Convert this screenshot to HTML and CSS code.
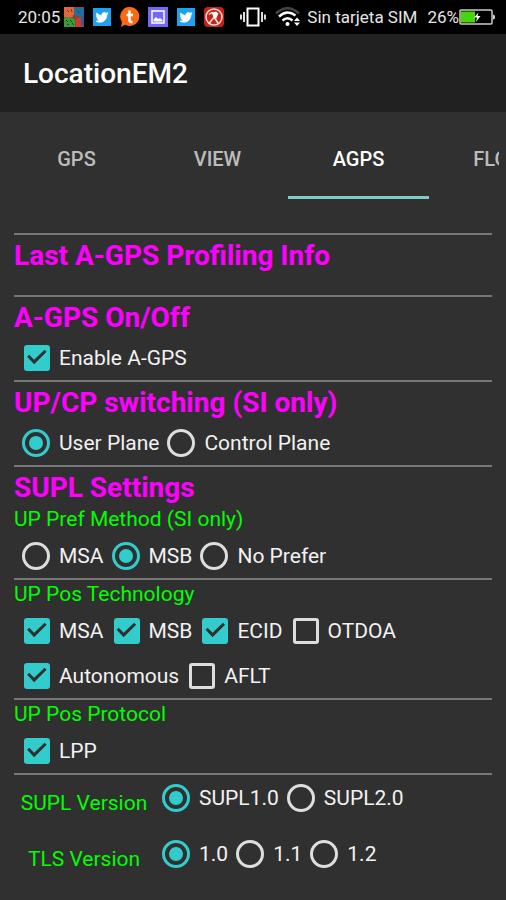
FILE: index.html
```
<!DOCTYPE html>
<html lang="es">
<head>
    <meta charset="UTF-8">
    <meta name="viewport" content="width=device-width, initial-scale=1.0">
    <title>LocationEM2</title>
    <link rel="stylesheet" href="styles.css">
</head>
<body>
    <div class="statusbar">
        <span class="clock">20:05</span>
        <div class="notifications">
            <svg width="20" height="20" viewBox="0 0 20 20">
                <rect width="20" height="20" fill="#8a4a3a"/>
                <path d="M0 0h10v9l-4 2-6-1z" fill="#e0693a"/>
                <path d="M10 1h10v8l-5 1-5-3z" fill="#1d6fa5"/>
                <path d="M0 11l6-1 5 3v7H0z" fill="#3c9a3c"/>
                <path d="M12 11h5v9h-5z" fill="#d2382c"/>
                <path d="M17 10h3v8h-3z" fill="#2a5f9a"/>
                <path d="M2 13l2 2m2-2l2 2m-5 2l2 1m3-2l2 2" stroke="#17421b" stroke-width="1"/>
                <path d="M3 3l2 2m2-3l1 3M13 4l3 2M9 8l3 4" stroke="#7a3320" stroke-width="1"/>
            </svg>
            <svg width="18" height="18" viewBox="0 0 24 24">
                <rect width="24" height="24" fill="#1da1f2"/>
                <path d="M20 7.500c-.6.3-1.200.4-1.900.5.7-.4 1.200-1 1.400-1.800-.6.4-1.300.6-2.100.8a3.300 3.300 0 0 0-5.600 3C9 9.900 6.600 8.600 5 6.600c-.9 1.500-.4 3.400 1 4.400-.5 0-1-.2-1.500-.4 0 1.600 1.100 2.900 2.600 3.200-.5.1-1 .2-1.500.1.400 1.300 1.600 2.200 3.100 2.300A6.600 6.600 0 0 1 4 17.500c6.800 4 14.500-.7 14.400-8.300.6-.5 1.200-1 1.600-1.700z" fill="#fff" stroke="#fff"/>
            </svg>
            <svg width="20" height="20" viewBox="0 0 20 20">
                <path d="M10 0a9.500 9.500 0 1 1-5 17.700L1 20l1-5A9.500 9.500 0 0 1 10 0z" fill="#fb6a13"/>
                <path d="M9.500 3.500v10q0 2 3 1.500M6.500 8h6.500" fill="none" stroke="#fff" stroke-width="2.500"/>
            </svg>
            <svg width="20" height="20" viewBox="0 0 20 20">
                <rect width="20" height="20" fill="#7468f5"/>
                <rect x="4" y="4" width="12" height="12" fill="none" stroke="#fff" stroke-width="1.500"/>
                <path d="M5.500 14.500v-2l2.500-2.500 2 2 2-1 2.500 2v1.500z" fill="#fff"/>
            </svg>
            <svg width="18" height="18" viewBox="0 0 24 24">
                <rect width="24" height="24" fill="#1da1f2"/>
                <path d="M20 7.500c-.6.3-1.200.4-1.900.5.7-.4 1.200-1 1.400-1.800-.6.4-1.300.6-2.100.8a3.300 3.300 0 0 0-5.600 3C9 9.900 6.600 8.600 5 6.600c-.9 1.500-.4 3.400 1 4.400-.5 0-1-.2-1.500-.4 0 1.600 1.100 2.900 2.600 3.200-.5.1-1 .2-1.500.1.400 1.300 1.600 2.200 3.100 2.300A6.600 6.600 0 0 1 4 17.500c6.800 4 14.500-.7 14.400-8.300.6-.5 1.200-1 1.600-1.700z" fill="#fff" stroke="#fff"/>
            </svg>
            <svg width="20" height="20" viewBox="0 0 20 20">
                <rect width="20" height="20" rx="4" fill="#c5221a"/>
                <circle cx="10" cy="10" r="8" fill="none" stroke="#f3dcd8" stroke-width="1.500"/>
                <path d="M5 7.500l3-2 5 2-1 3-2.500.5-5 6M10 10l4 6" fill="none" stroke="#f8e8e4" stroke-width="1.500"/>
                <path d="M8 6l4-1.500 2.500 2-2 3.500-3 .5z" fill="#fff"/>
            </svg>
        </div>
        <div class="signals">
            <svg width="26" height="20" viewBox="0 0 26 20">
                <rect x="7.500" y="1.500" width="11" height="17" fill="none" stroke="#fff" stroke-width="2"/>
                <path d="M4 5v10M22 5v10M1 7.500v5M25 7.500v5" stroke="#ddd" stroke-width="2"/>
            </svg>
            <svg width="26" height="20" viewBox="0 0 26 20">
                <path d="M1 6.500Q12.500-4 24 6.500" fill="none" stroke="#444" stroke-width="2.500"/>
                <path d="M4 9.500Q12 2 20.500 8.500M7.500 13.500Q12.500 9 17.500 13.500" fill="none" stroke="#fff" stroke-width="2.500"/>
                <circle cx="12.500" cy="17" r="2" fill="#fff"/>
                <path d="M19 14l3-3.500 3 3.500zM19 15.500l3 3.500 3-3.500z" fill="#fff"/>
            </svg>
        </div>
        <span class="carrier">Sin tarjeta SIM</span>
        <span class="battery">26%
            <svg width="36" height="16" viewBox="0 0 36 16">
                <rect x="1" y="1" width="32" height="14" rx="1" fill="#000" stroke="#ccc" stroke-width="1.500"/>
                <path d="M2 2.500h14v11H2z" fill="#47d50b"/>
                <path d="M34 5.500q2 0 2 2.500t-2 2.500z" fill="#ddd"/>
                <path d="M19.500 3.500l-4.500 5h3l-1 4.500 4.500-6h-3z" fill="#fff"/>
            </svg>
        </span>
    </div>

    <header class="titlebar">
        <h1>LocationEM2</h1>
    </header>

    <nav class="tabs">
        <button type="button">GPS</button>
        <button type="button">VIEW</button>
        <button type="button" class="active">AGPS</button>
        <button type="button">FLOW</button>
    </nav>

    <main>
        <section class="profiling">
            <h2>Last A-GPS Profiling Info</h2>
        </section>

        <section>
            <h2>A-GPS On/Off</h2>
            <div class="options">
                <label><input type="checkbox" name="enable" checked>Enable A-GPS</label>
            </div>
        </section>

        <section>
            <h2>UP/CP switching (SI only)</h2>
            <div class="options">
                <label><input type="radio" name="plane" checked>User Plane</label>
                <label><input type="radio" name="plane">Control Plane</label>
            </div>
        </section>

        <section>
            <h2>SUPL Settings</h2>
            <h3>UP Pref Method (SI only)</h3>
            <div class="options">
                <label><input type="radio" name="method">MSA</label>
                <label><input type="radio" name="method" checked>MSB</label>
                <label><input type="radio" name="method">No Prefer</label>
            </div>
        </section>

        <section>
            <h3>UP Pos Technology</h3>
            <div class="options">
                <label><input type="checkbox" name="msa" checked>MSA</label>
                <label><input type="checkbox" name="msb" checked>MSB</label>
                <label><input type="checkbox" name="ecid" checked>ECID</label>
                <label><input type="checkbox" name="otdoa">OTDOA</label>
            </div>
            <div class="options">
                <label><input type="checkbox" name="autonomous" checked>Autonomous</label>
                <label><input type="checkbox" name="aflt">AFLT</label>
            </div>
        </section>

        <section>
            <h3>UP Pos Protocol</h3>
            <div class="options">
                <label><input type="checkbox" name="lpp" checked>LPP</label>
            </div>
        </section>

        <section>
            <div class="version">
                <h3>SUPL Version</h3>
                <div class="options">
                    <label><input type="radio" name="supl" checked>SUPL1.0</label>
                    <label><input type="radio" name="supl">SUPL2.0</label>
                </div>
            </div>
            <div class="version">
                <h3>TLS Version</h3>
                <div class="options">
                    <label><input type="radio" name="tls" checked>1.0</label>
                    <label><input type="radio" name="tls">1.1</label>
                    <label><input type="radio" name="tls">1.2</label>
                </div>
            </div>
        </section>
    </main>
</body>
</html>
```
FILE: styles.css
```
* {
    box-sizing: border-box;
}

body {
    margin: 0;
    background-color: #303030;
    color: #f2f2f2;
    font-family: Roboto, "Liberation Sans", sans-serif;
    font-size: 21px;
}

h1, h2, h3 {
    margin: 0;
}

/* status bar */
.statusbar {
    display: flex;
    align-items: center;
    height: 34px;
    padding: 0 11px 0 18px;
    background-color: #000;
    color: #e6e6e6;
    font-size: 17px;
    white-space: nowrap;
}

.statusbar svg {
    display: block;
    flex: none;
}

.notifications {
    display: grid;
    grid-template-columns: repeat(6, 20px);
    place-items: center;
    gap: 8px;
    margin-left: 4px;
}

.signals {
    display: flex;
    gap: 9px;
    margin-left: auto;
}

.carrier {
    margin-left: 6px;
}

.battery {
    display: flex;
    align-items: center;
    margin-left: 10px;
}

/* title */
.titlebar {
    padding: 21px 23px 19px;
    background-color: #212121;
}

h1 {
    color: #fff;
    font-size: 28px;
    font-weight: 500;
    line-height: 38px;
}

/* tabs */
.tabs {
    display: flex;
    margin: 7px 7px 0 6px;
    overflow: hidden;
}

.tabs button {
    flex: none;
    width: 141px;
    height: 80px;
    padding: 3px 0 0;
    border: none;
    border-bottom: 3px solid transparent;
    background: none;
    color: #bcbcbc;
    font-family: inherit;
    font-size: 20px;
    font-weight: 500;
    cursor: pointer;
}

.tabs button.active {
    border-bottom-color: #80cbc4;
    color: #fff;
}

/* settings */
main {
    padding: 34px 14px 19px;
}

section {
    border-top: 2px solid #777;
}

.profiling {
    padding-bottom: 22px;
}

h2 {
    padding-top: 4px;
    color: #f0f;
    font-size: 28px;
    font-weight: 700;
    line-height: 34px;
}

h3 {
    color: #0f0;
    font-size: 21px;
    font-weight: 400;
    line-height: 28px;
}

.options {
    display: flex;
    flex-wrap: wrap;
}

.options label {
    display: flex;
    align-items: center;
    height: 45px;
}

input {
    appearance: none;
    flex: none;
    cursor: pointer;
}

input[type="radio"] {
    width: 28px;
    height: 28px;
    margin: 0 9px 0 8px;
    padding: 4px;
    border: 3px solid #dedede;
    border-radius: 50%;
}

input[type="radio"]:checked {
    border-color: #33cccc;
    background: #33cccc content-box;
}

input[type="checkbox"] {
    width: 26px;
    height: 26px;
    margin: 0 9px 0 10px;
    border: 3px solid #dedede;
    border-radius: 3px;
}

input[type="checkbox"]:checked {
    border: none;
    background-color: #33cccc;
}

input[type="checkbox"]:checked::before {
    content: "";
    display: block;
    width: 26px;
    height: 26px;
    background-color: #303030;
    clip-path: polygon(12% 47%, 20% 39%, 39% 59%, 79% 20%, 87% 28%, 39% 76%);
}

.version {
    display: grid;
    grid-template-columns: 140px 1fr;
    height: 56px;
}

.version h3 {
    align-self: center;
    text-align: center;
}
```
